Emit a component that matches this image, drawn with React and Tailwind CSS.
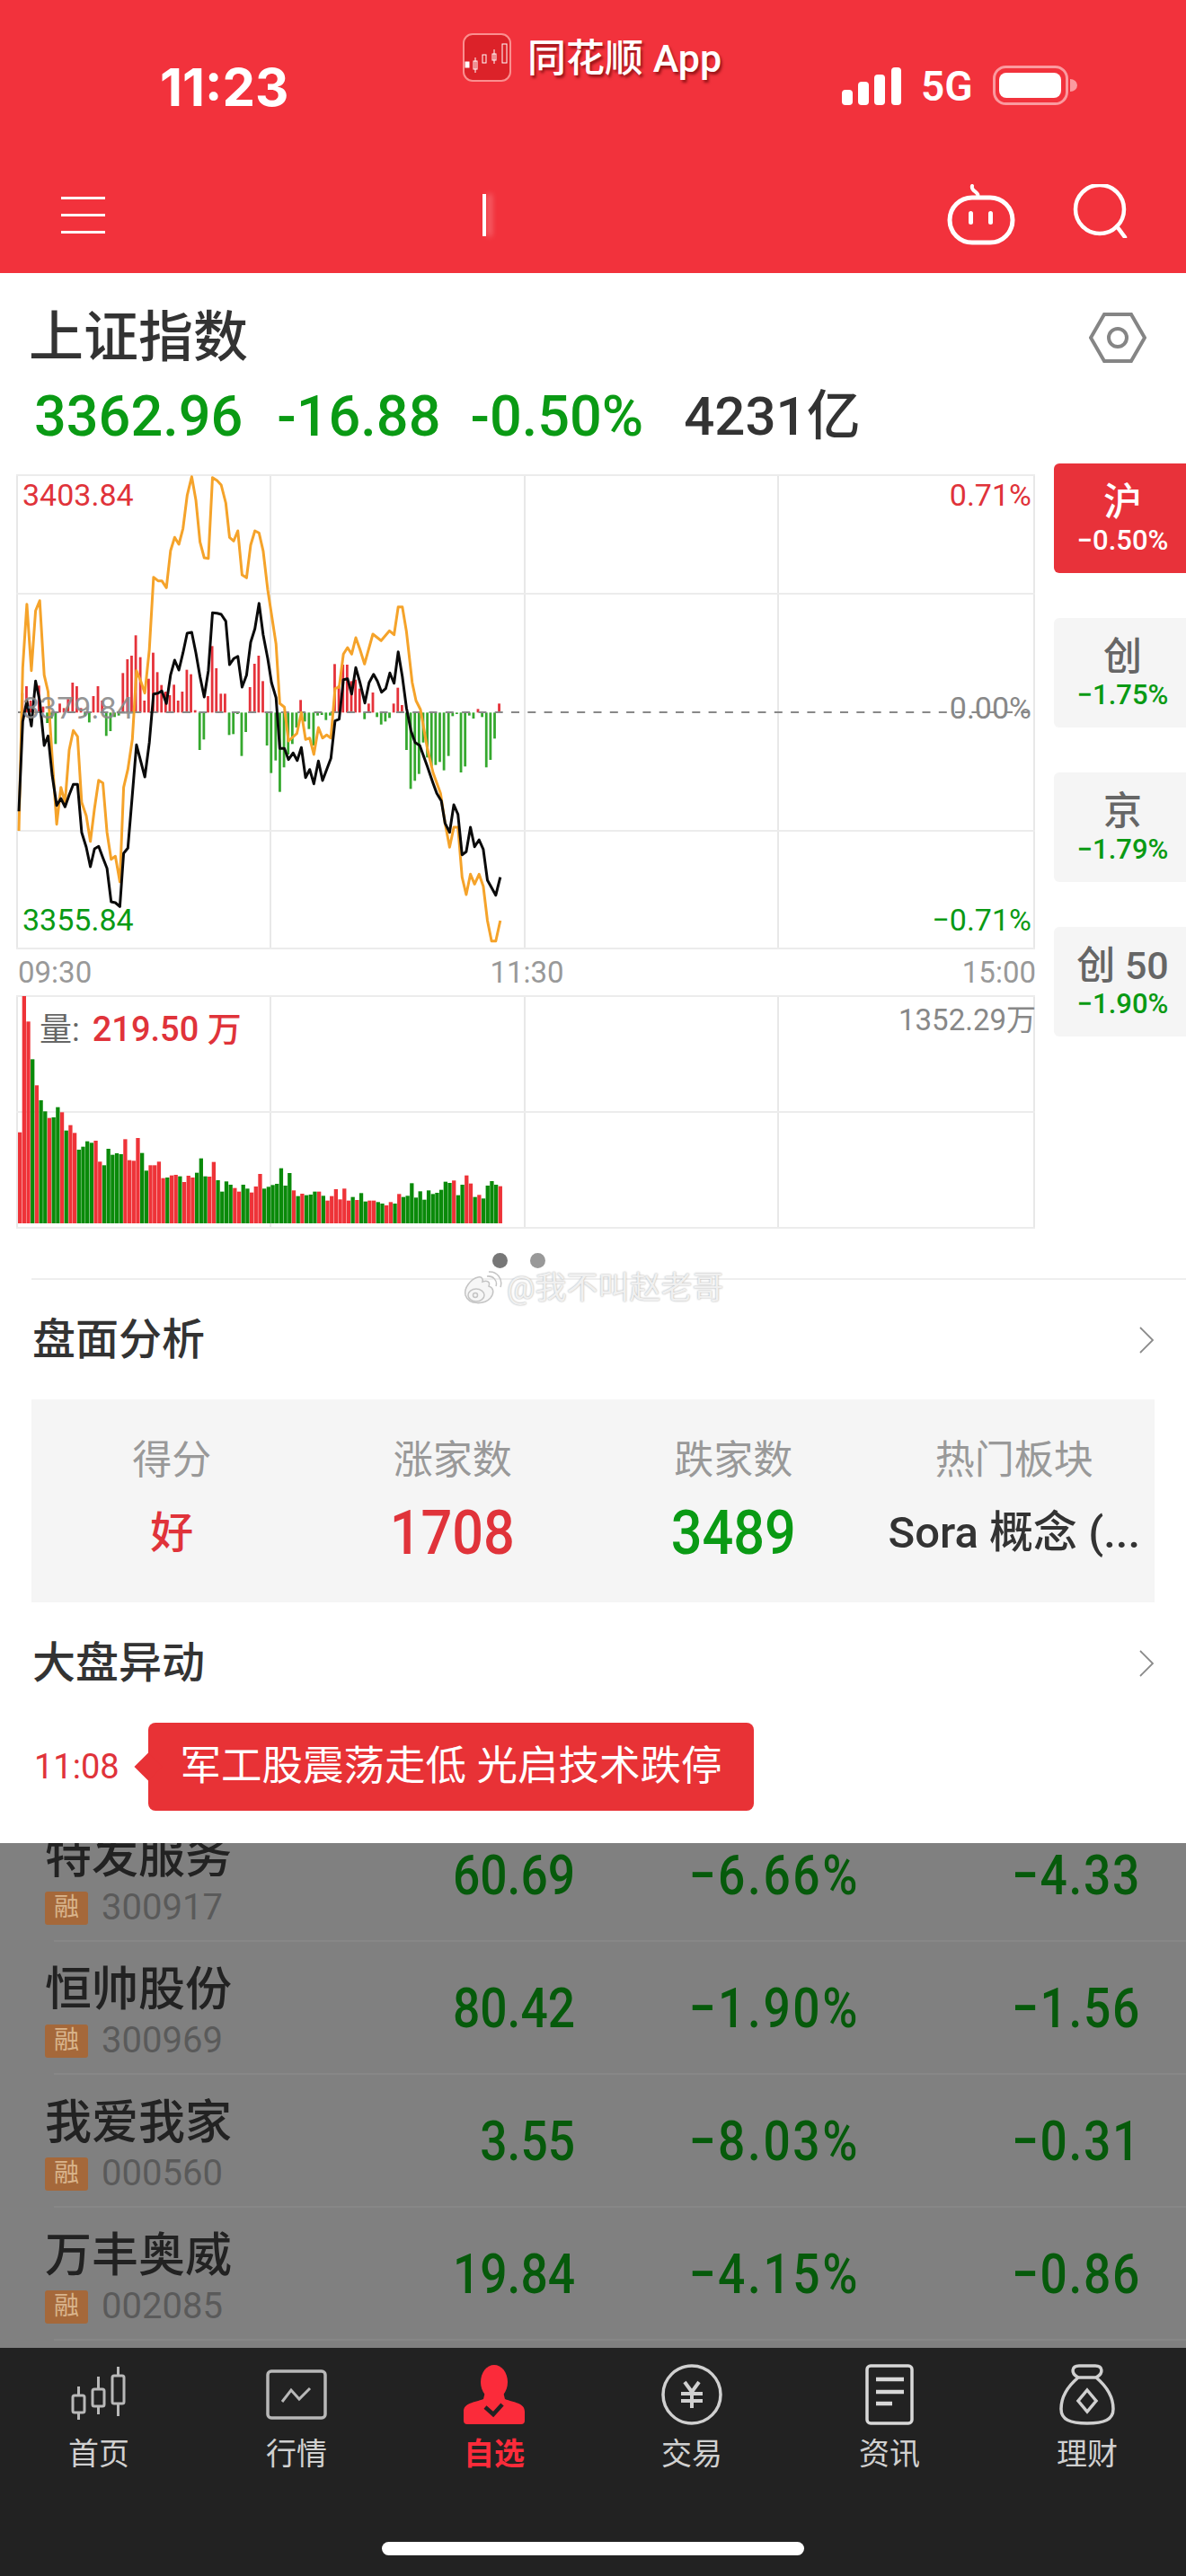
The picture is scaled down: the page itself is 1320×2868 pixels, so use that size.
import React from 'react';

// chart points were read off the reference, stored as [x, y] in crop units
const blackLine = [[50,1180],[60,880],[71,810],[83,895],[94,745],[105,810],[117,960],[127,928],[138,1060],[150,1160],[161,1137],[172,1165],[183,1125],[194,1090],[205,1090],[216,1250],[228,1300],[239,1365],[250,1305],[261,1297],[272,1335],[283,1370],[294,1482],[305,1485],[317,1498],[327,1320],[338,1303],[345,1200],[361,958],[383,1065],[395,950],[406,788],[418,785],[428,778],[440,820],[451,725],[462,675],[473,708],[484,650],[495,585],[507,582],[518,650],[529,730],[540,798],[551,710],[562,517],[574,518],[585,522],[597,545],[607,690],[618,670],[629,662],[640,765],[652,725],[663,615],[674,570],[685,485],[696,590],[708,670],[718,750],[730,800],[740,970],[752,970],[763,1007],[775,985],[786,1010],[797,967],[808,1067],[819,1040],[830,1088],[842,1012],[853,1077],[864,1040],[875,1003],[886,878],[897,872],[908,740],[919,737],[930,788],[941,700],[952,750],[965,818],[976,750],[988,722],[998,745],[1009,782],[1020,770],[1031,718],[1042,752],[1053,647],[1064,730],[1075,835],[1087,912],[1098,950],[1110,960],[1130,1030],[1145,1085],[1155,1120],[1167,1145],[1177,1220],[1189,1250],[1200,1158],[1211,1190],[1222,1325],[1233,1315],[1244,1233],[1255,1298],[1267,1275],[1278,1307],[1289,1410],[1300,1435],[1311,1460],[1323,1400]];

const orangeLine = [[50,1245],[60,700],[71,488],[83,710],[94,510],[105,476],[117,725],[127,780],[138,1000],[150,1223],[161,1100],[172,1150],[183,975],[194,910],[205,930],[216,1150],[228,1195],[239,1280],[250,1170],[261,1076],[272,1085],[283,1250],[294,1340],[305,1330],[317,1415],[327,1100],[338,1040],[350,940],[361,710],[372,745],[383,785],[395,640],[406,398],[418,410],[428,410],[440,433],[451,310],[462,265],[473,288],[484,235],[495,125],[507,62],[518,140],[529,280],[540,333],[551,335],[562,65],[574,75],[585,90],[597,150],[607,265],[618,277],[629,243],[640,390],[652,400],[663,290],[674,243],[685,250],[696,310],[708,440],[730,620],[740,820],[752,832],[763,945],[785,920],[797,850],[808,940],[819,935],[830,990],[842,900],[853,935],[864,925],[875,935],[886,770],[897,765],[908,655],[919,633],[930,655],[941,600],[952,640],[964,688],[986,588],[1008,610],[1030,577],[1042,590],[1053,497],[1064,497],[1075,580],[1090,750],[1100,810],[1112,840],[1130,970],[1145,1050],[1165,1120],[1177,1220],[1189,1300],[1200,1233],[1211,1233],[1222,1400],[1233,1458],[1244,1390],[1255,1423],[1267,1390],[1278,1430],[1289,1545],[1300,1613],[1311,1613],[1323,1545]];

const flowBars = [[59,785],[70,762],[81,810],[103,760],[114,830],[125,885],[136,870],[147,955],[158,820],[169,835],[180,805],[192,750],[203,762],[214,835],[225,862],[236,883],[247,795],[259,762],[270,810],[281,928],[292,912],[303,865],[314,860],[325,718],[337,672],[348,660],[359,592],[371,665],[382,810],[393,737],[405,650],[416,715],[427,758],[438,780],[449,792],[460,757],[471,810],[482,780],[494,707],[505,722],[516,842],[528,975],[539,940],[550,795],[561,628],[572,702],[584,787],[595,787],[606,925],[617,922],[628,855],[639,995],[650,915],[661,765],[673,687],[684,660],[695,745],[706,960],[717,1052],[729,1010],[740,1115],[751,1033],[762,990],[773,955],[784,900],[795,808],[806,880],[817,905],[829,960],[840,860],[851,858],[862,875],[873,860],[885,688],[896,760],[907,690],[918,690],[929,745],[940,740],[951,770],[964,872],[975,820],[986,783],[997,865],[1008,890],[1019,880],[1030,868],[1041,820],[1052,767],[1063,825],[1075,975],[1086,1105],[1097,1078],[1108,1055],[1119,950],[1130,1000],[1141,1030],[1152,1025],[1163,1015],[1174,1043],[1186,995],[1197,862],[1208,855],[1219,1050],[1230,1030],[1241,860],[1252,870],[1264,838],[1275,865],[1286,1033],[1297,1008],[1308,937],[1320,820]];

const volume = 'r542 r87 r172 g298 r385 g435 g472 r494 g492 g458 r475 g536 r518 r544 g600 g590 g572 g577 r570 r640 g652 g597 g617 g612 g615 r565 r635 r637 r561 g611 g670 r652 r652 r640 r695 g693 r686 r684 g689 r708 r687 r693 g677 g629 g689 r690 r641 g702 g740 g706 g717 r728 r740 g717 g730 r743 r723 r681 g730 g724 g718 g714 g662 g720 g678 r736 g755 r747 g752 g750 g740 r740 g754 r770 r755 r732 r766 r730 r770 g758 r768 g745 g773 r770 r770 g775 g780 r786 r775 g780 r748 g758 g754 g712 g760 g739 g767 g736 g748 g744 g734 g707 g711 r703 g752 g717 r686 r713 g758 r751 g763 g720 g705 g717 r722'.split(' ');

const gridX = [19, 301, 584, 866, 1151];

const sideTabs = [
  { name: '沪', pct: '−0.50%', active: true },
  { name: '创', pct: '−1.75%' },
  { name: '京', pct: '−1.79%' },
  { name: '创 50', pct: '−1.90%' },
];

const stocks = [
  { name: '特发服务', code: '300917', price: '60.69', pct: '−6.66%', diff: '−4.33' },
  { name: '恒帅股份', code: '300969', price: '80.42', pct: '−1.90%', diff: '−1.56' },
  { name: '我爱我家', code: '000560', price: '3.55', pct: '−8.03%', diff: '−0.31' },
  { name: '万丰奥威', code: '002085', price: '19.84', pct: '−4.15%', diff: '−0.86' },
];

const toPoints = (line) => line.map(([x, y]) => `${(x / 2.376).toFixed(1)},${(y / 3).toFixed(1)}`).join(' ');

const PriceChart = () => (
  <svg viewBox="0 0 1160 547" className="block w-[1160px] h-[547px]">
    {gridX.map((x) => (
      <line key={x} x1={x} x2={x} y1="18" y2="547" stroke="#e8e8e8" strokeWidth="2" />
    ))}
    {[19, 151, 415, 546].map((y) => (
      <line key={y} x1="18" x2="1152" y1={y} y2={y} stroke="#ececec" strokeWidth="2" />
    ))}
    {flowBars.map(([x, y]) => {
      const top = Math.min(y, 850) / 3;
      const h = Math.abs(y - 850) / 3;
      return <rect key={x} x={x / 2.376 - 1.4} y={top} width="2.8" height={h} fill={y < 850 ? '#e5323a' : '#35a82e'} />;
    })}
    <line x1="20" x2="1152" y1="283" y2="283" stroke="#888" strokeWidth="2" strokeDasharray="9 9.3" />
    <polyline points={toPoints(orangeLine)} fill="none" stroke="#f5a32a" strokeWidth="3" strokeLinejoin="round" />
    <polyline points={toPoints(blackLine)} fill="none" stroke="#0a0a0a" strokeWidth="3" strokeLinejoin="round" />
  </svg>
);

const VolumeChart = () => (
  <svg viewBox="0 0 1160 260" className="block w-[1160px] h-[260px]">
    {gridX.map((x) => (
      <line key={x} x1={x} x2={x} y1="0" y2="259" stroke="#e8e8e8" strokeWidth="2" />
    ))}
    {[1, 130, 259].map((y) => (
      <line key={y} x1="18" x2="1152" y1={y} y2={y} stroke="#ececec" strokeWidth="2" />
    ))}
    {volume.map((v, i) => {
      const top = Number(v.slice(1)) / 3 - 28;
      return <rect key={i} x={20 + i * 4.69} y={top} width="4.3" height={254 - top} fill={v[0] === 'r' ? '#ee3338' : '#0a8a0a'} />;
    })}
  </svg>
);

const AppLogo = () => (
  <svg viewBox="0 0 54 54" className="w-[54px] h-[54px]">
    <rect x="1" y="1" width="52" height="52" rx="10" fill="#dc2229" stroke="#fb8f8f" strokeWidth="2" />
    <g fill="#fff" stroke="#fff" strokeWidth="1">
      <rect x="3" y="32" width="4" height="6" />
      <rect x="12" y="31" width="4" height="9" fill="none" />
      <rect x="22" y="24" width="4" height="9" fill="none" />
      <rect x="33" y="23" width="4" height="7" fill="none" />
      <rect x="44" y="12" width="5" height="21" fill="none" />
      <line x1="14" y1="27" x2="14" y2="44" />
      <line x1="35" y1="18" x2="35" y2="34" />
    </g>
  </svg>
);

const StatusRight = () => (
  <div className="flex items-end">
    <svg viewBox="0 0 66 42" className="w-[66px] h-[42px]">
      <rect x="0" y="25" width="12" height="17" rx="4" fill="#fff" />
      <rect x="18" y="16" width="12" height="26" rx="4" fill="#fff" />
      <rect x="36" y="8" width="12" height="34" rx="4" fill="#fff" />
      <rect x="55" y="0" width="11" height="42" rx="4" fill="#fff" />
    </svg>
    <span className="ml-[22px] text-[46px] leading-[42px] font-semibold text-white">5G</span>
    <svg viewBox="0 0 94 44" className="ml-[22px] w-[94px] h-[44px]">
      <rect x="1.5" y="1.5" width="81" height="41" rx="13" fill="none" stroke="#fb9a9f" strokeWidth="3" />
      <rect x="7" y="8" width="69" height="28" rx="8" fill="#fff" />
      <path d="M86 15 a8 7 0 0 1 0 14 Z" fill="#fb9a9f" />
    </svg>
  </div>
);

const RobotIcon = () => (
  <svg viewBox="0 0 76 68" className="w-[76px] h-[68px]" fill="none" stroke="#fff">
    <rect x="3" y="15" width="70" height="50" rx="25" strokeWidth="5" />
    <path d="M34 14 C37 9 26 8 28 2" strokeWidth="4" strokeLinecap="round" />
    <rect x="24" y="30" width="5" height="15" rx="2.5" fill="#fff" stroke="none" />
    <rect x="46" y="30" width="5" height="15" rx="2.5" fill="#fff" stroke="none" />
  </svg>
);

const SearchIcon = () => (
  <svg viewBox="0 0 62 60" className="w-[62px] h-[60px]" fill="none" stroke="#fff">
    <circle cx="30" cy="28" r="27" strokeWidth="4.5" />
    <path d="M49 47 L58 59" strokeWidth="4.5" strokeLinecap="round" />
  </svg>
);

const WeiboIcon = () => (
  <svg viewBox="0 0 46 40" className="w-[46px] h-[40px]" fill="#f6f6f6" stroke="#c4c4c4" strokeWidth="1.5">
    <path d="M4 27 C2 19 10 9 18 7 C22 6 24 9 23 12 C28 10 32 12 30 17 C36 19 36 25 32 30 C26 37 8 39 4 27 Z" />
    <ellipse cx="16" cy="27" rx="9" ry="7" />
    <circle cx="15" cy="27" r="2.5" />
    <path d="M28 6 C35 5 40 11 38 17 M30 1 C39 0 46 9 43 18" fill="none" />
  </svg>
);

const Chevron = () => (
  <svg viewBox="0 0 18 30" className="w-[18px] h-[30px]" fill="none" stroke="#8a8a8a" strokeWidth="1.8">
    <path d="M2 1 L16 15 L2 29" />
  </svg>
);

const CandleIcon = () => (
  <svg viewBox="0 0 64 64" className="w-[64px] h-[64px]" fill="none" stroke="#b8b8b8" strokeWidth="3">
    <rect x="3" y="33" width="13" height="19" rx="2" />
    <path d="M9.5 23 V33 M9.5 52 V60" />
    <rect x="25" y="26" width="13" height="19" rx="2" />
    <path d="M31.5 12 V26 M31.5 45 V54" />
    <rect x="47" y="11" width="13" height="31" rx="2" />
    <path d="M53.5 1 V11 M53.5 42 V56" />
  </svg>
);

const MarketIcon = () => (
  <svg viewBox="0 0 68 56" className="w-[68px] h-[56px]" fill="none" stroke="#b8b8b8" strokeWidth="3.5">
    <rect x="2" y="2" width="64" height="52" rx="4" />
    <path d="M18 36 L28 23 L37 33 L49 21" strokeWidth="3" />
  </svg>
);

const WatchIcon = () => (
  <svg viewBox="0 0 68 66" className="w-[68px] h-[66px]">
    <ellipse cx="34" cy="19" rx="15" ry="19" fill="#fb2b3a" />
    <path d="M24 30 H44 L46 38 C56 42 68 42 68 52 V62 Q68 66 64 66 H4 Q0 66 0 62 V52 C0 42 12 42 22 38 Z" fill="#fb2b3a" />
    <path d="M24 47 L33 55 L43 44" fill="none" stroke="#222" strokeWidth="4.5" />
  </svg>
);

const TradeIcon = () => (
  <svg viewBox="0 0 68 68" className="w-[68px] h-[68px]" fill="none" stroke="#d0d0d0">
    <circle cx="34" cy="34" r="32" strokeWidth="3.5" />
    <path d="M26 20 L34 31 L42 20 M22 33 H46 M22 41 H46 M34 31 V49" strokeWidth="4" />
  </svg>
);

const NewsIcon = () => (
  <svg viewBox="0 0 54 68" className="w-[54px] h-[68px]" fill="none" stroke="#d8d8d8">
    <rect x="2" y="2" width="50" height="64" rx="4" strokeWidth="3.5" />
    <path d="M12 17 H43 M12 31 H43 M12 44 H30" strokeWidth="4.5" />
  </svg>
);

const BagIcon = () => (
  <svg viewBox="0 0 62 68" className="w-[62px] h-[68px]" fill="none" stroke="#d0d0d0" strokeWidth="3.5">
    <path d="M21 15 C12 10 14 2 22 2 H40 C48 2 50 10 41 15" />
    <path d="M21 15 H41 C54 26 60 38 60 50 C60 62 50 66 31 66 C12 66 2 62 2 50 C2 38 8 26 21 15 Z" />
    <path d="M31 29 L41 41 L31 53 L21 41 Z" />
  </svg>
);

const tabs = [
  { label: '首页', Icon: CandleIcon },
  { label: '行情', Icon: MarketIcon },
  { label: '自选', Icon: WatchIcon, active: true },
  { label: '交易', Icon: TradeIcon },
  { label: '资讯', Icon: NewsIcon },
  { label: '理财', Icon: BagIcon },
];

const SectionTitle = ({ title }) => (
  <div className="flex items-center justify-between pl-[36px] pr-[35px]">
    <span className="text-[48px] leading-[60px] font-medium text-[#333]">{title}</span>
    <Chevron />
  </div>
);

const StockRow = ({ stock, first }) => (
  <div className={first ? 'mt-[-38px]' : ''}>
    <div className="flex h-[146px] items-center">
      <div className="w-[400px] pl-[50px] pt-[7px]">
        <div className="text-[52px] leading-[62px] font-medium text-[#222]">{stock.name}</div>
        <div className="flex items-center mt-[5px]">
          <span className="flex h-[37px] w-[48px] items-center justify-center rounded-[3px] bg-[#a5683a] text-[28px] text-[#d9b48c]">融</span>
          <span className="ml-[15px] text-[40px] leading-[40px] text-[#5a5a5a]">{stock.code}</span>
        </div>
      </div>
      <div className="w-[240px] origin-right scale-x-[0.86] text-right text-[62px] font-medium text-[#065a0b]">{stock.price}</div>
      <div className="w-[317px] origin-right scale-x-[0.86] text-right text-[62px] tracking-[3px] font-medium text-[#065a0b]">{stock.pct}</div>
      <div className="w-[313px] origin-right scale-x-[0.86] text-right text-[62px] tracking-[2px] font-medium text-[#065a0b]">{stock.diff}</div>
    </div>
    <div className="ml-[60px] h-[2px] bg-[#878787]" />
  </div>
);

export default function App() {
  return (
    <div className="w-[1320px] h-[2868px] overflow-hidden bg-white [font-family:Roboto,'Noto_Sans_CJK_SC',sans-serif]">
      {/* Red header */}
      <header className="h-[304px] bg-[#f2323c]">
        <div className="flex h-[130px]">
          <div className="w-[515px] pl-[178px] pt-[66px] text-[58px] leading-[62px] font-bold text-white [font-family:Inter,sans-serif]">11:23</div>
          <div className="w-[422px] pt-[37px] flex items-start">
            <AppLogo />
            <span className="ml-[18px] text-[43px] leading-[56px] font-medium text-white [text-shadow:2px_3px_3px_rgba(90,0,0,0.6)]">同花顺 App</span>
          </div>
          <div className="pt-[73px]">
            <StatusRight />
          </div>
        </div>
        <div className="flex items-center h-[174px] pt-[44px] pl-[68px] pr-[64px]">
          <div className="w-[49px] flex flex-col gap-[16px]">
            <div className="h-[3px] bg-white" />
            <div className="h-[3px] bg-white" />
            <div className="h-[3px] bg-white" />
          </div>
          <div className="ml-[420px] h-[47px] w-[4px] bg-white shadow-[6px_0_6px_rgba(255,255,255,0.35)]" />
          <div className="ml-auto flex items-start gap-[64px]">
            <RobotIcon />
            <SearchIcon />
          </div>
        </div>
      </header>

      {/* Title + quote */}
      <section className="h-[206px]">
        <div className="flex items-center justify-between pl-[32px] pr-[44px] pt-[36px]">
          <h1 className="text-[61px] leading-[72px] font-medium text-[#333]">上证指数</h1>
          <svg viewBox="0 0 64 56" className="w-[64px] h-[56px]" fill="none" stroke="#858585" strokeWidth="4">
            <path d="M17 2 H47 L62 28 L47 54 H17 L2 28 Z" />
            <circle cx="32" cy="28" r="10" />
          </svg>
        </div>
        <div className="flex pl-[38px] pt-[16px] text-[63px] leading-[72px] font-medium">
          <span className="text-[#0a9a14]">3362.96</span>
          <span className="ml-[38px] text-[#0a9a14]">-16.88</span>
          <span className="ml-[33px] text-[#0a9a14]">-0.50%</span>
          <span className="ml-[45px] text-[60px] text-[#333]">4231亿</span>
        </div>
      </section>

      {/* Charts and side tabs */}
      <section className="flex">
        <div className="w-[1173px]">
          <div className="relative h-[547px]">
            <PriceChart />
            <span className="absolute left-[25px] top-[21px] text-[34px] leading-[40px] text-[#e0333a]">3403.84</span>
            <span className="absolute right-[25px] top-[21px] text-[34px] leading-[40px] text-[#e0333a]">0.71%</span>
            <span className="absolute left-[25px] top-[258px] text-[34px] leading-[40px] text-[#888]/90">3379.84</span>
            <span className="absolute right-[25px] top-[258px] text-[34px] leading-[40px] text-[#888]">0.00%</span>
            <span className="absolute left-[25px] bottom-[13px] text-[34px] leading-[40px] text-[#0a9a14]">3355.84</span>
            <span className="absolute right-[25px] bottom-[13px] text-[34px] leading-[40px] text-[#0a9a14]">−0.71%</span>
          </div>
          <div className="flex h-[51px] items-center justify-between pl-[20px] pr-[20px] text-[33px] text-[#999]">
            <span>09:30</span>
            <span>11:30</span>
            <span>15:00</span>
          </div>
          <div className="relative h-[260px]">
            <VolumeChart />
            <span className="absolute left-[44px] top-[16px] text-[36px] leading-[44px] text-[#666]">
              量:
              <span className="ml-[14px] text-[38px] font-medium text-[#e0333a]">219.50 万</span>
            </span>
            <span className="absolute right-[20px] top-[8px] text-[33px] leading-[40px] text-[#888]">1352.29万</span>
          </div>
        </div>
        <div className="w-[147px] pt-[6px] flex flex-col gap-[50px]">
          {sideTabs.map((t) => (
            <div
              key={t.pct}
              className={`flex h-[122px] flex-col items-center justify-center rounded-l-[6px] pl-[6px] ${t.active ? 'bg-[#e8323a]' : 'bg-[#f5f5f5]'}`}
            >
              <span className={`text-[43px] leading-[50px] font-medium ${t.active ? 'text-white' : 'text-[#666]'}`}>{t.name}</span>
              <span className={`text-[31px] leading-[36px] font-medium ${t.active ? 'text-white' : 'text-[#0a9a14]'}`}>{t.pct}</span>
            </div>
          ))}
        </div>
      </section>

      {/* Pager dots + divider */}
      <section className="relative h-[58px]">
        <div className="flex gap-[25px] pt-[27px] pl-[548px]">
          <div className="h-[17px] w-[17px] rounded-full bg-[#777]" />
          <div className="h-[17px] w-[17px] rounded-full bg-[#999]" />
        </div>
        <div className="ml-[35px] mt-[11px] h-[2px] bg-[#eee]" />
        {/* watermark */}
        <div className="absolute left-[514px] top-[47px] flex items-center">
          <WeiboIcon />
          <span className="ml-[4px] text-[35px] leading-[40px] text-[#f0f0f0] [text-shadow:0_0_2px_#a0a0a0]">@我不叫赵老哥</span>
        </div>
      </section>

      {/* Analysis panel */}
      <section className="h-[626px] pt-[36px]">
        <SectionTitle title="盘面分析" />
        <div className="mx-[35px] mt-[36px] grid h-[226px] grid-cols-4 items-center bg-[#f5f5f5] pb-[6px]">
          {[
            { label: '得分', value: '好', cls: 'text-[48px] text-[#e0333a] font-medium' },
            { label: '涨家数', value: '1708', cls: 'text-[68px] text-[#e0333a] font-medium scale-x-90' },
            { label: '跌家数', value: '3489', cls: 'text-[68px] text-[#0a9a14] font-medium scale-x-90' },
            { label: '热门板块', value: 'Sora 概念 (...', cls: 'text-[49px] text-[#333] font-medium' },
          ].map((c) => (
            <div key={c.label} className="flex flex-col items-center">
              <span className="text-[44px] leading-[54px] text-[#999]">{c.label}</span>
              <span className={`mt-[24px] leading-[60px] whitespace-nowrap ${c.cls}`}>{c.value}</span>
            </div>
          ))}
        </div>
        <div className="mt-[38px]">
          <SectionTitle title="大盘异动" />
        </div>
        <div className="flex items-center pl-[38px] mt-[36px]">
          <span className="w-[127px] text-[38px] text-[#e0333a]">11:08</span>
          <div className="relative flex h-[98px] w-[674px] items-center justify-center rounded-[8px] bg-[#e83236] text-[45.5px] text-white">
            <span className="absolute left-[-11px] h-[22px] w-[22px] rotate-45 bg-[#e83236]" />
            军工股震荡走低 光启技术跌停
          </div>
        </div>
      </section>

      {/* Dimmed stock list */}
      <section className="h-[562px] overflow-hidden bg-[#808080]">
        {stocks.map((s, i) => (
          <StockRow key={s.code} stock={s} first={i === 0} />
        ))}
      </section>

      {/* Bottom nav */}
      <nav className="h-[254px] bg-[#222]">
        <div className="grid grid-cols-6 pt-[18px]">
          {tabs.map(({ label, Icon, active }) => (
            <div key={label} className="flex flex-col items-center">
              <div className="flex h-[68px] items-center"><Icon /></div>
              <span className={`mt-[12px] text-[34px] leading-[40px] ${active ? 'font-bold text-[#fb2b3a]' : 'text-[#d0d0d0]'}`}>{label}</span>
            </div>
          ))}
        </div>
        <div className="mx-auto mt-[78px] h-[15px] w-[470px] rounded-full bg-white" />
      </nav>
    </div>
  );
}
